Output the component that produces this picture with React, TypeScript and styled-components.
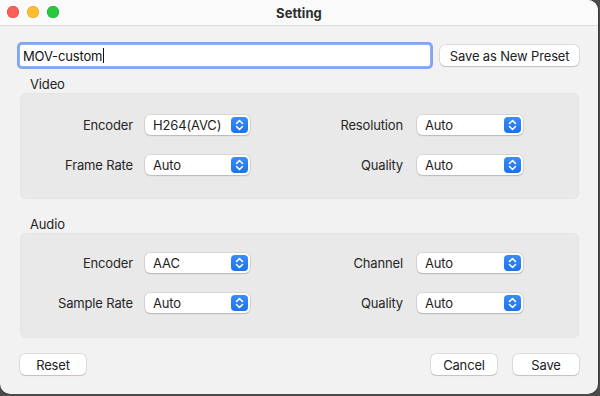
import React from "react";
import styled, { createGlobalStyle } from "styled-components";

const Global = createGlobalStyle`
  html, body { margin: 0; padding: 0; background: #4b4b4b; }
  body { font-family: Inter, "Noto Sans", "Liberation Sans", sans-serif; -webkit-font-smoothing: antialiased; letter-spacing: -0.15px; }
  * { box-sizing: border-box; }
`;

const Window = styled.div`
  width: 598px;
  height: 394px;
  background: #f2f2f2;
  border-radius: 0 10px 10px 10px;
  overflow: hidden;
  display: flex;
  flex-direction: column;
  box-shadow: 0 0 0 0.5px rgba(0, 0, 0, 0.5);
`;

const TitleBar = styled.div`
  height: 26px;
  flex: none;
  background: #fafafa;
  border-bottom: 1px solid #dcdcdc;
  position: relative;
  display: flex;
  align-items: center;
  justify-content: center;
`;

const Lights = styled.div`
  position: absolute;
  left: 7px;
  top: 6px;
  display: flex;
  gap: 8px;
`;

const Light = styled.span<{ $c: string; $b: string }>`
  width: 12px;
  height: 12px;
  border-radius: 50%;
  background: ${(p) => p.$c};
  box-shadow: inset 0 0 0 0.5px ${(p) => p.$b};
`;

const Title = styled.div`
  font-size: 13px;
  font-weight: 700;
  color: #2e2e2e;
  letter-spacing: 0.1px;
`;

const Content = styled.div`
  flex: 1;
  padding: 19px 19px 0 20px;
  display: flex;
  flex-direction: column;
`;

const PresetRow = styled.div`
  display: flex;
  align-items: center;
  height: 21px;
  gap: 10px;
`;

const NameField = styled.div`
  width: 411px;
  height: 21px;
  background: #fff;
  border-radius: 2px;
  box-shadow: 0 0 0 1px #8fb3f3, 0 0 0 3px #7ea6f1;
  display: flex;
  align-items: center;
  padding-left: 3px;
  font-size: 13px;
  color: #111;
`;

const Caret = styled.span`
  display: inline-block;
  width: 1px;
  height: 15px;
  background: #111;
  margin-left: 1px;
`;

const Button = styled.div<{ $w: number }>`
  width: ${(p) => p.$w}px;
  height: 21px;
  background: #fff;
  border-radius: 5px;
  box-shadow: 0 0 0 0.5px rgba(0, 0, 0, 0.18), 0 1px 1px rgba(0, 0, 0, 0.12);
  display: flex;
  align-items: center;
  justify-content: center;
  font-size: 13px;
  color: #222;
`;

const Section = styled.div<{ $top: number }>`
  margin-top: ${(p) => p.$top}px;
  display: flex;
  flex-direction: column;
`;

const SectionLabel = styled.div`
  height: 16px;
  line-height: 14px;
  padding-left: 10px;
  font-size: 13px;
  color: #222;
`;

const Group = styled.div<{ $pt: number; $h: number }>`
  height: ${(p) => p.$h}px;
  background: #e9e9e9;
  border-radius: 6px;
  box-shadow: inset 0 0 0 0.5px rgba(0, 0, 0, 0.04);
  padding-top: ${(p) => p.$pt}px;
  display: flex;
  flex-direction: column;
  gap: 20px;
`;

const Row = styled.div`
  display: grid;
  grid-template-columns: 113px 105px 1fr 106px;
  column-gap: 12px;
  align-items: center;
  padding-right: 56px;
`;

const FieldLabel = styled.div<{ $pr?: number }>`
  text-align: right;
  font-size: 13px;
  color: #262626;
  padding-right: ${(p) => p.$pr ?? 0}px;
`;

const SelectBox = styled.div`
  height: 20px;
  background: #fff;
  border-radius: 5px;
  box-shadow: 0 0 0 0.5px rgba(0, 0, 0, 0.16), 0 1px 1.5px rgba(0, 0, 0, 0.14);
  display: flex;
  align-items: center;
  justify-content: space-between;
  padding: 0 2px 0 8px;
  font-size: 13px;
  color: #1d1d1d;
`;

const Stepper = styled.span`
  width: 17px;
  height: 16px;
  border-radius: 4px;
  background: linear-gradient(#3b8cf8, #1b72f2);
  display: flex;
  align-items: center;
  justify-content: center;
`;

const Footer = styled.div`
  margin-top: 16px;
  display: flex;
  align-items: center;
  gap: 16px;
`;

const Spacer = styled.div`
  flex: 1;
`;

function Select({ value }: { value: string }) {
  return (
    <SelectBox>
      <span>{value}</span>
      <Stepper>
        <svg width="9" height="12" viewBox="0 0 9 12" fill="none">
          <path d="M1.5 4.5 L4.5 1.5 L7.5 4.5" stroke="#fff" strokeWidth="1.6" strokeLinecap="round" strokeLinejoin="round" />
          <path d="M1.5 7.5 L4.5 10.5 L7.5 7.5" stroke="#fff" strokeWidth="1.6" strokeLinecap="round" strokeLinejoin="round" />
        </svg>
      </Stepper>
    </SelectBox>
  );
}

type RowDef = [string, string, string, string];

function SettingsGroup({ label, rows, top, pt, h }: { label: string; rows: RowDef[]; top: number; pt: number; h: number }) {
  return (
    <Section $top={top}>
      <SectionLabel>{label}</SectionLabel>
      <Group $pt={pt} $h={h}>
        {rows.map(([l1, v1, l2, v2]) => (
          <Row key={l1 + l2}>
            <FieldLabel>{l1}</FieldLabel>
            <Select value={v1} />
            <FieldLabel $pr={2}>{l2}</FieldLabel>
            <Select value={v2} />
          </Row>
        ))}
      </Group>
    </Section>
  );
}

export default function App() {
  return (
    <>
      <Global />
      <Window>
        <TitleBar>
          <Lights>
            <Light $c="#fe5f57" $b="#e0443e" />
            <Light $c="#febc2e" $b="#dea123" />
            <Light $c="#28c840" $b="#1aab29" />
          </Lights>
          <Title>Setting</Title>
        </TitleBar>
        <Content>
          <PresetRow>
            <NameField>
              MOV-custom<Caret />
            </NameField>
            <Button $w={139}>Save as New Preset</Button>
          </PresetRow>
          <SettingsGroup
            label="Video"
            top={11}
            pt={22}
            h={106}
            rows={[
              ["Encoder", "H264(AVC)", "Resolution", "Auto"],
              ["Frame Rate", "Auto", "Quality", "Auto"],
            ]}
          />
          <SettingsGroup
            label="Audio"
            top={18}
            pt={20}
            h={105}
            rows={[
              ["Encoder", "AAC", "Channel", "Auto"],
              ["Sample Rate", "Auto", "Quality", "Auto"],
            ]}
          />
          <Footer>
            <Button $w={66}>Reset</Button>
            <Spacer />
            <Button $w={66}>Cancel</Button>
            <Button $w={66}>Save</Button>
          </Footer>
        </Content>
      </Window>
    </>
  );
}
